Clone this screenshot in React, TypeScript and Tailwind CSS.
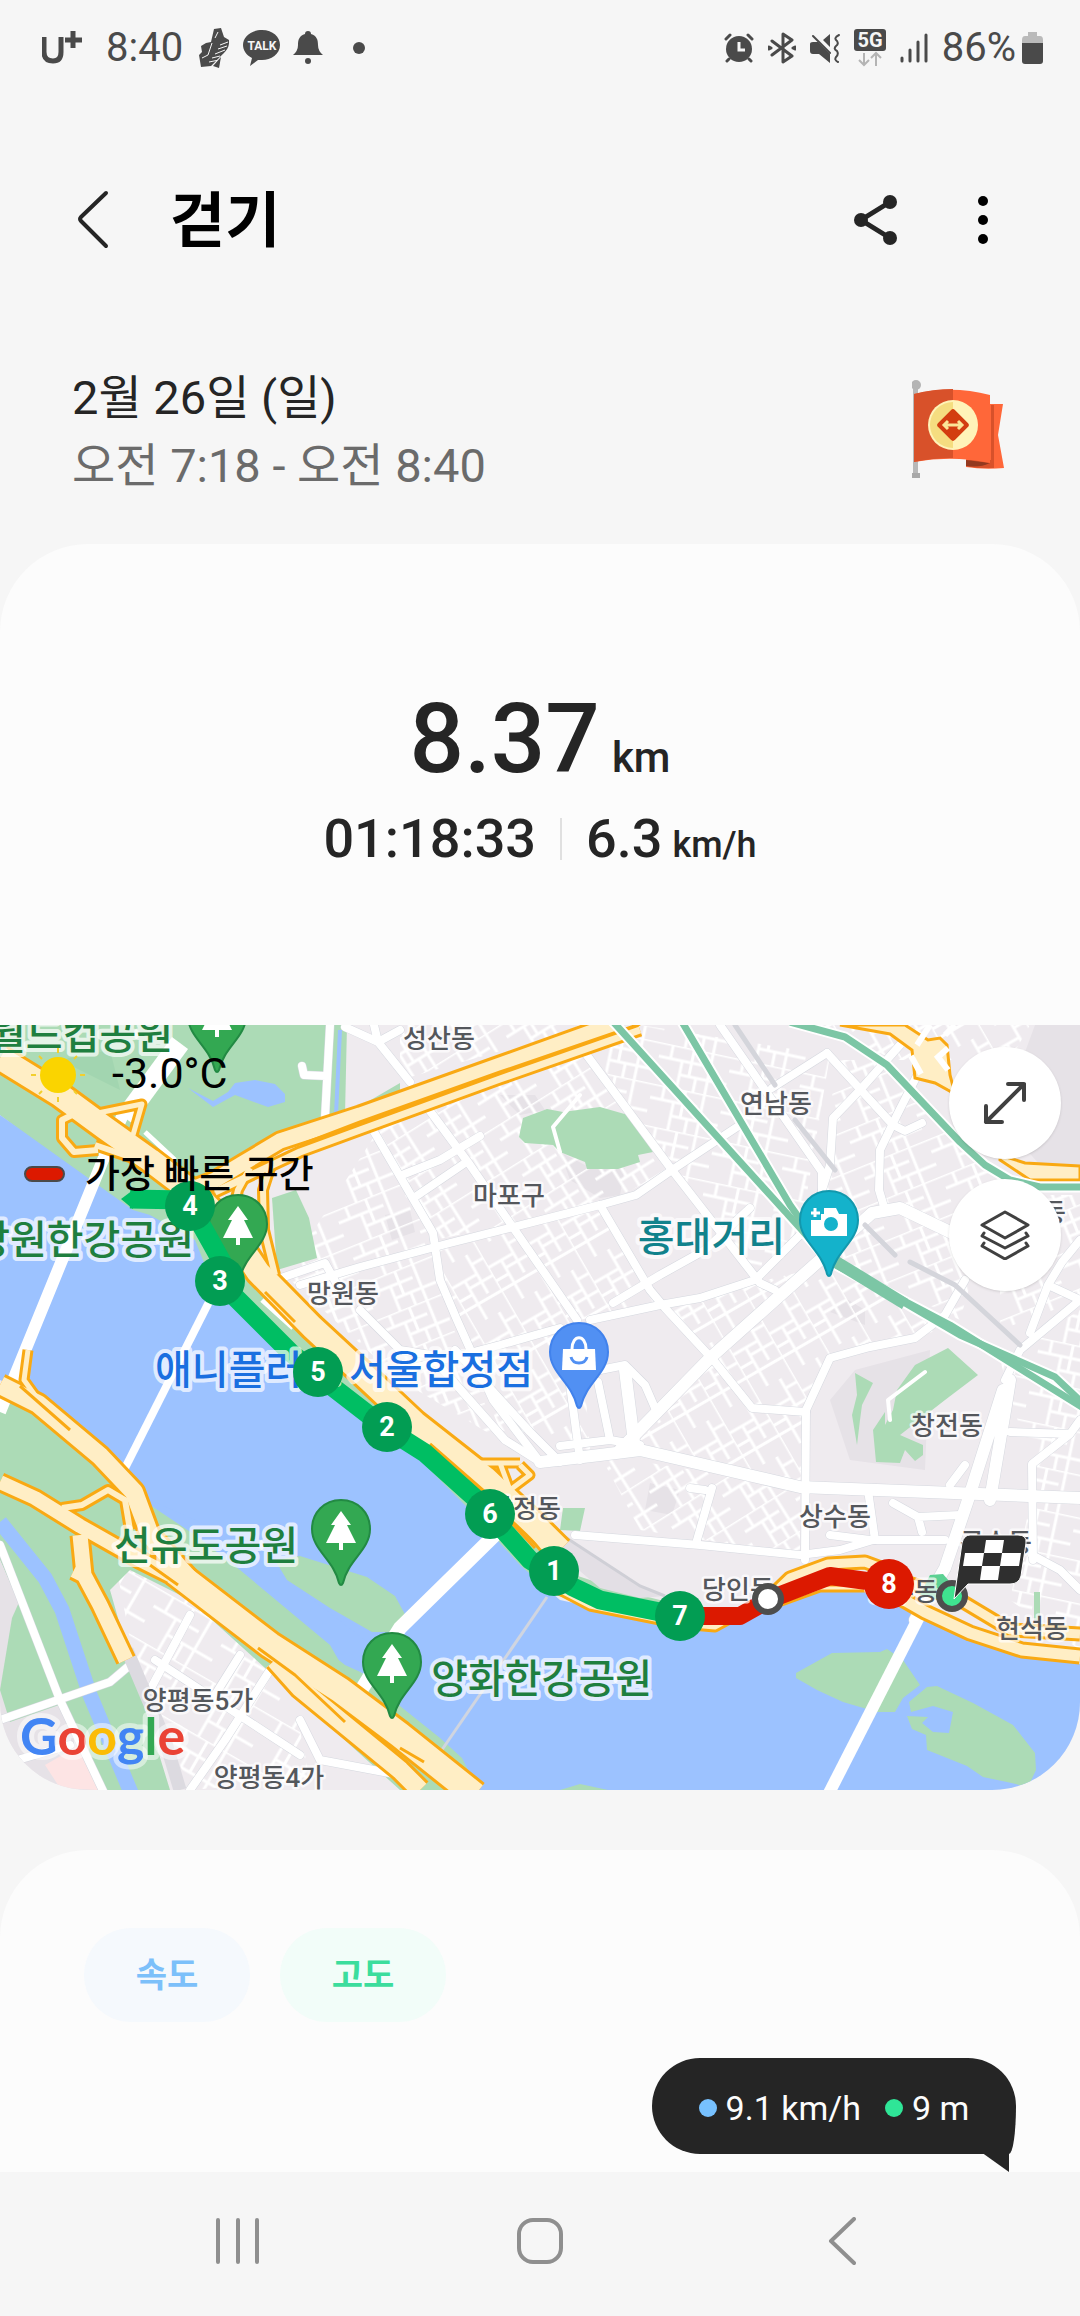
import type { ReactNode } from 'react';

const cityRoads = [
  'M373 1130 L433 1233 L440 1280 L457 1320 L493 1400 L540 1462',
  'M427 1107 L470 1165 L510 1223 L577 1320',
  'M583 1050 L672 1170 L760 1283 L775 1290',
  'M300 1285 L360 1267 L450 1243 L600 1205 L636 1195 L672 1170 L740 1125',
  'M600 1205 L650 1290 L665 1308 L715 1362 L752 1408 L806 1412',
  'M590 1320 L660 1305 L700 1298 L755 1280 L800 1235',
  'M613 1303 L660 1275 L705 1250 L750 1208',
  'M402 1175 L440 1160 L480 1136 M415 1197 L465 1163',
  'M827 1053 L893 1125 L905 1131 L922 1123',
  'M827 1053 L772 1088 M900 1045 L860 1090 L833 1118 L830 1165 L822 1190',
  'M885 1210 L879 1190 L880 1150 L897 1115 L930 1050',
  'M720 1025 L822 1172 L822 1200 L800 1235',
  'M805 1560 L806 1410 L830 1358 L870 1347 L915 1338 L945 1315 L965 1280',
  'M575 1535 L700 1545 L800 1555 L840 1550 L873 1540 L945 1540',
  'M868 1490 L875 1540 M893 1503 L918 1517 L960 1515 M918 1517 L922 1532',
  'M600 1370 L625 1365 L645 1385 L655 1408 M570 1385 L580 1460',
  'M598 1382 L610 1440 M560 1446 L610 1440 L640 1445',
  'M430 1355 L505 1440 L540 1462 M455 1350 L530 1432 L560 1462',
  'M405 1370 L500 1345 L560 1328',
  'M360 1310 L400 1350 L430 1355',
  'M1030 1333 L1048 1285 L1080 1300 M1048 1285 L1062 1262 L1080 1240',
  'M1080 1300 L1020 1350 L1005 1380',
  'M1010 1432 L1070 1434 L1032 1464 L1033 1560 M1070 1434 L1080 1420',
  'M1032 1555 L1060 1570 L1080 1590 M965 1465 L950 1485',
  'M374 1025 L378 1042 L410 1082 M378 1042 L400 1030 M345 1027 L378 1042',
  'M330 1025 L325 1118 M302 1066 L304 1075 L326 1076',
  'M690 1488 L705 1490 M712 1488 L697 1540',
  'M830 1535 L870 1540 M275 1280 L325 1263 L340 1290',
];

const wideRoads = [
  'M540 1462 L600 1455 L640 1450 L800 1487 L1080 1498',
  'M620 1450 L710 1358 L775 1300 L820 1260 L872 1213 L900 1208 L950 1232',
  'M915 1620 L945 1568 L968 1500 L1003 1390 M990 1500 L1006 1405 L1010 1380',
  'M625 1370 L635 1450',
];

const southRoads = [
  'M0 1545 L60 1700 L105 1795',
  'M0 1720 L110 1682 L130 1665',
  'M190 1615 L150 1690 M155 1660 L300 1755 M240 1655 L215 1695',
  'M270 1670 L225 1740 L190 1790 M300 1720 L320 1760 L400 1775',
  'M0 1765 L70 1745',
];

const river =
  'M0 1115 L133 1210 L150 1215 L195 1240 L215 1290 L280 1350 L350 1412 L420 1460 L470 1510 L520 1565 L560 1600 L660 1622 L720 1628 L800 1592 L880 1592 L930 1614 L1020 1655 L1080 1664 L1080 1790 L478 1790 L462 1758 L440 1738 L400 1706 L365 1675 L330 1650 L240 1580 L200 1560 L150 1505 L100 1455 L40 1400 L0 1380 Z';

const highways = [
  { d: 'M215 1192 L300 1152 L360 1130 L500 1079 L640 1030', w: 7 },
  { d: 'M185 1192 L215 1180 L245 1162 L280 1141 L360 1115 L500 1065 L620 1022', w: 15 },
  { d: 'M78 1112 L62 1120 L62 1138 L74 1152 L98 1150', w: 6 },
  { d: 'M95 1145 L130 1157 L170 1182', w: 6 },
  { d: 'M98 1113 L142 1104 L133 1135', w: 5 },
  { d: 'M250 1168 L238 1190 L232 1215 M272 1162 L263 1190 L264 1230 L275 1275', w: 6 },
  { d: 'M0 1058 L60 1095 L105 1128 L150 1160 L200 1198 L230 1230 L258 1272 L312 1327 L366 1377 L415 1423 L485 1478 L535 1525 L560 1550', w: 23 },
  { d: 'M478 1463 L520 1463 M500 1463 L510 1490 L530 1475 L520 1465', w: 5 },
  { d: 'M510 1505 L545 1548', w: 7 },
  { d: 'M28 1350 L24 1380 L60 1430', w: 5 },
  { d: 'M550 1585 L590 1606 L680 1624 L715 1627 L735 1616', w: 5 },
  { d: 'M765 1602 L790 1578 L828 1564 L865 1562 L900 1575', w: 9 },
  { d: 'M770 1606 L820 1588 L890 1588', w: 3 },
  { d: 'M900 1580 L960 1600 L1010 1630 L1080 1634', w: 9 },
  { d: 'M890 1592 L925 1612 L970 1633 L1022 1650 L1080 1656', w: 11 },
];

const southHighways = [
  { d: 'M30 1395 L80 1435 L125 1480', w: 6 },
  { d: 'M62 1508 L82 1505 L108 1490 L125 1500 L130 1530', w: 6 },
  { d: 'M80 1535 L84 1575 L74 1570 M84 1575 L100 1605 L126 1660', w: 15 },
  { d: 'M0 1385 L38 1404 L100 1456 L134 1492 L150 1535 L190 1580', w: 18 },
  { d: 'M0 1482 L35 1498 L80 1526 L140 1560 L190 1585', w: 14 },
  { d: 'M275 1660 L300 1688 L400 1770 L420 1790', w: 18 },
  { d: 'M175 1572 L270 1645 L340 1690 L400 1735 L475 1795', w: 25 },
];

const rails = [
  'M607 1015 L800 1228 L830 1262 L950 1325 L1090 1412',
  'M678 1015 L790 1205 L830 1262',
  'M790 1022 L845 1037 L887 1065 L960 1142 L985 1165 L1010 1180 L1040 1187 L1080 1187',
  'M900 1300 L960 1335 L1055 1377 L1090 1410',
];

// residential blocks, each with its own street direction
const blocks = [
  { fill: 'url(#streetsA)', points: '285,1275 375,1135 435,1240 450,1320 500,1440 400,1380' },
  { fill: 'url(#streetsB)', points: '378,1130 580,1055 672,1170 600,1205 435,1240' },
  { fill: 'url(#streetsC)', points: '436,1243 600,1208 660,1300 580,1320 590,1450 500,1430 455,1320' },
  { fill: 'url(#streetsD)', points: '640,1025 830,1055 800,1235 755,1280 672,1170 590,1048' },
  { fill: 'url(#streetsA)', points: '835,1060 890,1060 1000,1180 960,1320 840,1262 825,1190' },
  { fill: 'url(#streetsC)', points: '660,1305 830,1265 940,1330 830,1358 806,1412 800,1485 630,1450 715,1362' },
  { fill: 'url(#streetsB)', points: '600,1455 800,1487 800,1555 640,1530' },
  { fill: 'url(#streetsD)', points: '1000,1360 1080,1310 1080,1650 1010,1600 1035,1480' },
  { fill: 'url(#streetsA)', points: '1000,1195 1080,1195 1080,1300 1000,1330' },
  { fill: 'url(#streetsB)', points: '400,1025 590,1025 400,1080' },
  { fill: 'url(#streetsE)', points: '115,1560 190,1600 290,1680 310,1780 190,1790 130,1640' },
  { fill: 'url(#streetsC)', points: '790,1025 1030,1025 1010,1060 900,1060' },
];

const placeLabels = [
  { text: '성산동', x: 439, y: 1048 },
  { text: '연남동', x: 776, y: 1113 },
  { text: '마포구', x: 509, y: 1205 },
  { text: '망원동', x: 343, y: 1303 },
  { text: '창전동', x: 947, y: 1435 },
  { text: '상수동', x: 835, y: 1526 },
  { text: '당인동', x: 738, y: 1599 },
  { text: '현석동', x: 1032, y: 1638 },
  { text: '합정동', x: 525, y: 1518 },
  { text: '상수동', x: 902, y: 1601 },
  { text: '구수동', x: 996, y: 1552 },
  { text: '대흥동', x: 1030, y: 1222 },
  { text: '양평동5가', x: 198, y: 1710 },
  { text: '양평동4가', x: 269, y: 1787 },
];

const poiLabels = [
  { text: '월드컵공원', x: 173, y: 1049, fill: '#1f7f3f' },
  { text: '망원한강공원', x: 194, y: 1254, fill: '#1f7f3f' },
  { text: '선유도공원', x: 298, y: 1560, fill: '#1f7f3f' },
  { text: '양화한강공원', x: 652, y: 1693, fill: '#1f7f3f' },
  { text: '애니플러스 서울합정점', x: 533, y: 1384, fill: '#1a6fe0' },
  { text: '홍대거리', x: 785, y: 1251, fill: '#11828c' },
];

const kmMarkers = [
  { km: 4, x: 190, y: 1206 },
  { km: 3, x: 220, y: 1281 },
  { km: 5, x: 318, y: 1372 },
  { km: 2, x: 387, y: 1427 },
  { km: 6, x: 490, y: 1514 },
  { km: 1, x: 554, y: 1571 },
  { km: 7, x: 680, y: 1616 },
  { km: 8, x: 889, y: 1584, fast: true },
];

function StreetPattern({ id, angle, w, h }: { id: string; angle: number; w: number; h: number }) {
  return (
    <pattern id={id} width={w * 3} height={h * 3} patternUnits="userSpaceOnUse" patternTransform={`rotate(${angle})`}>
      <path
        d={`M0 0 H${w * 3} M0 ${h} H${w * 2} M${w} ${h * 2} H${w * 3} M${w / 2} 0 V${h} M${w * 1.4} 0 V${h * 2} M${w * 2.2} 0 V${h * 3} M${w} ${h} V${h * 3} M${w * 1.7} ${h * 2} V${h * 3}`}
        stroke="#fff"
        strokeWidth="3"
        fill="none"
      />
    </pattern>
  );
}

function Pin({ x, y, fill, edge, children }: { x: number; y: number; fill: string; edge: string; children: ReactNode }) {
  return (
    <g transform={`translate(${x} ${y})`}>
      <path
        d="M0 -29 C17 -29 29 -16 29 0 C29 21 7 31 2 54 Q0 58 -2 54 C-7 31 -29 21 -29 0 C-29 -16 -17 -29 0 -29 Z"
        fill={fill}
        stroke={edge}
        strokeWidth="2"
      />
      {children}
    </g>
  );
}

function TreePin({ x, y }: { x: number; y: number }) {
  return (
    <Pin x={x} y={y} fill="#33a852" edge="#228a43">
      <path d="M0 -18 L10 -4 H6 L15 14 H2 V21 H-2 V14 H-15 L-6 -4 H-10 Z" fill="#fff" />
    </Pin>
  );
}

function RouteMap() {
  return (
    <svg
      viewBox="0 1025 1080 765"
      preserveAspectRatio="xMidYMid slice"
      className="block h-[765px] w-full"
      role="img"
      aria-label="이동 경로 지도"
    >
      <defs>
        <StreetPattern id="streetsA" angle={-22} w={24} h={13} />
        <StreetPattern id="streetsB" angle={-32} w={20} h={14} />
        <StreetPattern id="streetsC" angle={60} w={22} h={14} />
        <StreetPattern id="streetsD" angle={12} w={24} h={14} />
        <StreetPattern id="streetsE" angle={30} w={26} h={18} />
      </defs>

      <rect x="0" y="1025" width="1080" height="765" fill="#efebef" />
      <g fill="#e6e2e7">
        <path d="M1035 1025 H1080 V1165 H1040 L1000 1120 Z" />
        <path d="M500 1095 L535 1095 L545 1110 L520 1115 Z M560 1152 L585 1165 L625 1168 L620 1195 L600 1198 L570 1180 Z" />
        <path d="M830 1400 L855 1370 L930 1350 L925 1470 L850 1460 Z M385 1215 L410 1210 L415 1232 L392 1240 Z" />
        <path d="M830 1312 L845 1298 L865 1310 L865 1325 Z M650 1483 L680 1490 L672 1515 L645 1510 Z" />
      </g>
      {blocks.map((block, i) => (
        <polygon key={i} points={block.points} fill={block.fill} />
      ))}

      {/* parks */}
      <g fill="#acdbb6">
        <path d="M0 1025 H347 L345 1115 L400 1083 V1100 L290 1140 L230 1175 L190 1185 L215 1225 L300 1310 L420 1430 L560 1570 L620 1590 L700 1610 L640 1622 L540 1590 L470 1510 L350 1412 L215 1290 L150 1230 L0 1115 Z" />
        <path d="M272 1198 L296 1190 L309 1218 L317 1258 L277 1270 Z" />
        <path d="M523 1118 L547 1109 L563 1112 L600 1107 L628 1115 L653 1152 L638 1155 L640 1162 L618 1169 L587 1169 L585 1162 L560 1152 L553 1145 L525 1143 L519 1137 Z" />
        <path d="M948 1348 L978 1375 L945 1400 L900 1435 L923 1445 V1455 L915 1461 L905 1450 L900 1463 L876 1462 L873 1430 L885 1412 V1425 L893 1410 L897 1390 L915 1365 Z" />
        <path d="M855 1373 L873 1383 L862 1405 L860 1420 L857 1445 L852 1415 L857 1395 Z" />
        <path d="M563 1508 L585 1508 L580 1531 L560 1530 Z M1034 1592 H1040 V1620 H1034 Z" />
        <path d="M0 1385 L130 1480 L200 1560 L240 1580 L330 1650 L400 1700 L470 1745 L490 1790 H400 L190 1600 L130 1570 L110 1590 L130 1660 L170 1790 H100 L0 1560 Z" />
        <path d="M0 1620 L20 1620 L60 1710 L10 1720 Z" />
      </g>
      <path d="M0 1560 L100 1790 H0 Z" fill="#e6e2e7" />
      <path d="M12 1618 L20 1600 L62 1704 L10 1722 L0 1690 Z" fill="#acdbb6" />
      <path d="M45 1765 L80 1745 L98 1790 L60 1788 Z" fill="#fde4e4" />
      <path d="M90 1075 L60 1060 L110 1050 L120 1090 Z" fill="#a2d5b0" />

      {/* river */}
      <path d={river} fill="#9cc2ff" />
      <path d="M150 1500 L200 1522 L260 1550 L300 1590 L365 1640 L400 1690 L345 1665 L240 1582 L200 1560 Z" fill="#9cc2ff" />
      <path d="M0 1522 L45 1578 L62 1610 L90 1695 L132 1795" fill="none" stroke="#9cc2ff" strokeWidth="15" />
      <path d="M188 1088 L213 1107 L235 1095 L268 1107 L285 1102 L285 1094 L275 1084 L255 1080 L235 1083 L228 1092 L213 1101 Z" fill="#9cc2ff" />
      <path d="M340 1030 L336 1115" stroke="#9cc2ff" strokeWidth="4" />
      <g fill="#acdbb6">
        <path d="M150 1505 L195 1535 L240 1570 L330 1645 L350 1680 L260 1640 L180 1570 Z" />
        <path d="M275 1560 L300 1556 L367 1577 L395 1596 L407 1618 L395 1632 L372 1632 L330 1608 L287 1580 Z" />
        <path d="M796 1673 L832 1653 L880 1652 L887 1649 L903 1660 L920 1685 L903 1698 L895 1712 L877 1712 L843 1702 L817 1690 L796 1678 Z" />
        <path d="M909 1702 L927 1687 L937 1686 L973 1703 L1013 1725 L1035 1753 L1036 1770 L1028 1787 L1007 1782 L983 1777 L967 1766 L927 1750 L926 1735 L912 1729 L907 1716 L928 1717 L922 1723 L933 1732 L949 1733 L953 1712 L933 1706 L911 1712 Z" />
        <path d="M560 1790 L580 1784 L608 1790 Z" />
      </g>

      {/* streets */}
      <g fill="none" strokeLinecap="round" strokeLinejoin="round">
        <g stroke="#d5d8df">
          {cityRoads.map((d) => <path key={d} d={d} strokeWidth="9" />)}
          {wideRoads.map((d) => <path key={d} d={d} strokeWidth="13" />)}
          {southRoads.map((d) => <path key={d} d={d} strokeWidth="9" />)}
        </g>
        <g stroke="#fff">
          {cityRoads.map((d) => <path key={d} d={d} strokeWidth="8" />)}
          {wideRoads.map((d) => <path key={d} d={d} strokeWidth="12" />)}
          {southRoads.map((d) => <path key={d} d={d} strokeWidth="8" />)}
          <path d="M580 1095 L553 1127 L560 1152 M890 1420 L888 1400 L925 1372" strokeWidth="4" />
        </g>
        <path d="M735 1025 L775 1085 M795 1120 L835 1170 M865 1225 L895 1255 M910 1262 L955 1285 L1020 1345" stroke="#d4d5db" strokeWidth="5" />
      </g>
      <path d="M562 1535 L640 1586 L665 1596 L640 1598 L600 1588 L555 1550 Z" fill="#e3dfe5" />
      <path d="M562 1535 L640 1586 L665 1596" fill="none" stroke="#cfcfd6" strokeWidth="3" />
      <path d="M127 1650 L165 1740 L180 1790" fill="none" stroke="#dcdae0" strokeWidth="13" />

      {/* bridges */}
      <g fill="none" stroke="#fff">
        <path d="M180 1043 L125 1118" strokeWidth="20" />
        <path d="M125 1110 L105 1155 L0 1412" strokeWidth="12" />
        <path d="M210 1300 L120 1478" strokeWidth="8" />
        <path d="M505 1525 L400 1628 L355 1700" strokeWidth="14" />
        <path d="M920 1615 L828 1795" strokeWidth="12" />
        <path d="M145 1132 L175 1160 M262 1300 L293 1328" strokeWidth="5" />
      </g>
      <path d="M547 1597 L437 1757" stroke="#d0d5e0" strokeWidth="3" />

      {/* expressways */}
      <g fill="none" strokeLinejoin="round">
        {[...highways, ...southHighways].map((road) => (
          <path key={road.d} d={road.d} stroke="#f9a913" strokeWidth={road.w + 6} />
        ))}
        {[...highways, ...southHighways].map((road) => (
          <path key={road.d} d={road.d} stroke="#ffeec5" strokeWidth={road.w} />
        ))}
        <path d="M300 1145 L360 1122 L500 1072 L640 1024 M265 1292 L295 1322 M430 1444 L485 1492 M490 1500 L535 1548 M150 1565 L178 1585" stroke="#f9a913" strokeWidth="3" />
        <path d="M258 1648 L295 1675 L345 1722 M400 1748 L424 1762 M20 1386 L70 1430" stroke="#f9a913" strokeWidth="3" />
      </g>
      <path d="M840 1025 L890 1034 L912 1050 L915 1078 L935 1083 L955 1094 L950 1075 L947 1045 L940 1038 L928 1040 L905 1025 Z" fill="#ffeec5" stroke="#f9a913" strokeWidth="3" />
      <path d="M1000 1155 L1025 1163 L1080 1166 V1180 H1030 L1000 1160 Z" fill="#ffeec5" stroke="#f9a913" strokeWidth="3" />
      <path d="M911 1056 L921 1074 M948 1048 L938 1057 L948 1070 M917 1045 L930 1025 M945 1035 L955 1025" fill="none" stroke="#fff" strokeWidth="6" />

      <g fill="none" strokeLinejoin="round">
        {rails.map((d) => <path key={d} d={d} stroke="#fff" strokeWidth="11" />)}
        {rails.map((d) => <path key={d} d={d} stroke="#7cc6a5" strokeWidth="7" />)}
        <path d="M825 1255 L905 1304" stroke="#7cc6a5" strokeWidth="12" />
      </g>

      <TreePin x={217} y={1016} />
      <TreePin x={238} y={1224} />

      {/* walked route */}
      <g fill="none" strokeLinejoin="round">
        <path d="M130 1199 L185 1200 L203 1228 L222 1262 L228 1290 L290 1352 L330 1385 L387 1429 L425 1453 L475 1498 L505 1532 L530 1560 L573 1587 L600 1600 L680 1616" stroke="#00be63" strokeWidth="19" />
        <path d="M680 1616 L740 1616 L768 1600 L830 1576 L889 1584" stroke="#dc1900" strokeWidth="18" />
      </g>
      <path d="M121 1199 L133 1190 V1209 Z" fill="#00be63" />
      <path d="M920 1595 L930 1575 L943 1574 L955 1588 L940 1600 Z" fill="#5cd193" />

      <g fontFamily="Roboto, 'Noto Sans CJK KR', sans-serif" paintOrder="stroke" strokeLinejoin="round">
        {placeLabels.map((label) => (
          <text key={`${label.text}${label.x}`} x={label.x} y={label.y} textAnchor="middle" fontSize="26" fontWeight="500" fill="#54575c" stroke="#fff" strokeOpacity="0.7" strokeWidth="5">
            {label.text}
          </text>
        ))}
        {poiLabels.map((label) => (
          <text key={label.text} x={label.x} y={label.y} textAnchor="end" fontSize="40" fontWeight="500" fill={label.fill} stroke="#fff" strokeOpacity="0.7" strokeWidth="8">
            {label.text}
          </text>
        ))}
      </g>

      <TreePin x={341} y={1529} />
      <TreePin x={392} y={1662} />
      <Pin x={579} y={1352} fill="#5190f3" edge="#4182ec">
        <path d="M-16 -3 H16 L17 18 H-17 Z" fill="#fff" />
        <path d="M-7 -3 C-7 -18 7 -18 7 -3" fill="none" stroke="#fff" strokeWidth="3" />
        <path d="M-8 5 C-6 13 6 13 8 5" fill="none" stroke="#5190f3" strokeWidth="3" />
      </Pin>
      <Pin x={829} y={1220} fill="#14b2cb" edge="#1398ad">
        <path d="M-18 0 H-8 V-6 H-5 V-12 H7 L10 -6 H18 V16 H-18 Z" fill="#fff" />
        <path d="M-14 -12 V-3 M-18 -7 H-9" stroke="#fff" strokeWidth="3" />
        <circle cx="2" cy="4" r="7" fill="#14b2cb" />
      </Pin>

      {kmMarkers.map((marker) => (
        <g key={marker.km}>
          <circle cx={marker.x} cy={marker.y} r="25" fill={marker.fast ? '#dc1900' : '#029d53'} />
          <text x={marker.x} y={marker.y + 9} textAnchor="middle" fontFamily="Roboto, sans-serif" fontSize="27" fontWeight="700" fill="#fff">
            {marker.km}
          </text>
        </g>
      ))}
      <circle cx="768" cy="1599" r="13" fill="#fff" stroke="#4d4d4d" strokeWidth="6" />
      <circle cx="952" cy="1596" r="13" fill="#3fe28f" stroke="#4d4d4d" strokeWidth="6" />
      <path d="M970 1535 H1018 Q1027 1535 1026 1543 L1021 1576 Q1019 1584 1010 1584 H968 L954 1599 L962 1543 Q964 1535 970 1535 Z" fill="#2f2f2f" stroke="#fff" strokeWidth="1" />
      <path d="M986 1540 H1004 L1002 1553 H1021 L1019 1566 H1000 L998 1580 H980 L982 1566 H963 L965 1553 H984 Z" fill="#fff" />
      <path d="M984 1553 H1002 L1000 1566 H982 Z" fill="#2f2f2f" />

      <text x="20" y="1755" fontFamily="Lato, sans-serif" fontSize="52" fontWeight="700" paintOrder="stroke" stroke="#fff" strokeOpacity="0.5" strokeWidth="10" strokeLinejoin="round">
        <tspan fill="#4285f4">G</tspan>
        <tspan fill="#ea4335">o</tspan>
        <tspan fill="#fbbc05">o</tspan>
        <tspan fill="#4285f4">g</tspan>
        <tspan fill="#34a853">l</tspan>
        <tspan fill="#ea4335">e</tspan>
      </text>
    </svg>
  );
}

function StatusBar() {
  return (
    <div className="flex h-24 items-center justify-between pr-[37px] pl-[42px] text-[40px] leading-none text-[#4a4a4a]">
      <div className="flex items-center">
        <svg width="40" height="34" viewBox="0 0 40 34" fill="none" stroke="currentColor" aria-label="U+">
          <path d="M2 6 V21 Q2 30 11 30 Q19 30 19 21 V6" strokeWidth="5" />
          <path d="M31 0 V17 M23 9 H40" strokeWidth="5" />
        </svg>
        <span className="ml-6">8:40</span>
        <svg className="ml-4" width="32" height="40" viewBox="0 0 32 40" fill="currentColor">
          <path d="M15 1 L22 0 L25 9 L30 12 C31 22 24 25 17 33 L12 38 L2 39 L0 27 L3 24 L2 18 L7 15 L12 14 Z" />
          <path d="M29 14 L21 17 M28 18 L19 21 M26 22 L16 26 M21 28 L13 30 M20 32 L10 34 M3 30 L9 27 L13 15 M16 10 L19 4" stroke="#f6f6f6" strokeWidth="1" />
          <path d="M20 40 L22 29 L14 38 Z" />
        </svg>
        <svg className="ml-3" width="38" height="36" viewBox="0 0 38 36">
          <path d="M19 0 C30 0 37 7 37 15 C37 24 28 30 19 30 L15 30 L7 36 L9 28 C3 25 0 20 0 15 C0 7 8 0 19 0 Z" fill="currentColor" />
          <text x="19" y="20" textAnchor="middle" fontFamily="Roboto, sans-serif" fontSize="12" fontWeight="700" fill="#f6f6f6">TALK</text>
        </svg>
        <svg className="ml-3" width="30" height="34" viewBox="0 0 30 34" fill="currentColor">
          <path d="M15 0 Q18 0 18 3 C24 5 25 9 25 14 Q25 20 30 24 H0 Q5 20 5 14 C5 9 6 5 12 3 Q12 0 15 0 Z" />
          <circle cx="15" cy="30" r="3" />
        </svg>
        <span className="ml-[30px] size-3 rounded-full bg-[#4a4a4a]" />
      </div>
      <div className="flex items-center gap-[14px]">
        <svg width="30" height="30" viewBox="0 0 30 30" fill="currentColor">
          <circle cx="15" cy="16" r="13" />
          <path d="M2 6 L6 2 M28 6 L24 2 M5 26 L3 28 M25 26 L27 28" stroke="currentColor" strokeWidth="3" strokeLinecap="round" />
          <path d="M15 9 V17 H21" fill="none" stroke="#f6f6f6" strokeWidth="3" />
        </svg>
        <svg width="28" height="32" viewBox="0 0 28 32" fill="none" stroke="currentColor" strokeWidth="3" strokeLinejoin="round" strokeLinecap="round">
          <path d="M4 9 L24 24 L15 30 V2 L24 8 L4 23" />
          <path d="M1 15 L3 16 L1 17 M27 15 L25 16 L27 17" />
        </svg>
        <svg width="30" height="30" viewBox="0 0 30 30" fill="currentColor">
          <path d="M0 11 Q0 9 3 9 H8 L20 21 V30 L9 21 H3 Q0 21 0 18 Z M20 1 V14 L13 7 Z" />
          <path d="M3 3 L20 20 M29 2 Q23 5 27 8 Q29 11 26 13 Q23 16 27 18 Q29 21 26 24 Q24 27 28 29" fill="none" stroke="currentColor" strokeWidth="2" strokeLinecap="round" />
        </svg>
        <svg width="32" height="38" viewBox="0 0 32 38">
          <rect width="32" height="22" rx="3" fill="currentColor" />
          <text x="16" y="18" textAnchor="middle" fontFamily="Roboto, sans-serif" fontSize="20" fontWeight="700" fill="#f6f6f6">5G</text>
          <path d="M10 24 V36 M5 31 L10 36 L15 31 M22 37 V24 M17 29 L22 24 L27 29" fill="none" stroke="#b4b4b4" strokeWidth="2" />
        </svg>
        <svg width="28" height="30" viewBox="0 0 28 30" stroke="currentColor" strokeWidth="3" strokeLinecap="round">
          <path d="M2 25 V28 M10 17 V28 M18 9 V28 M26 2 V28" />
        </svg>
        <div className="flex items-center gap-[6px]">
          <span>86%</span>
          <svg width="21" height="32" viewBox="0 0 21 32">
            <path d="M6 0 H15 V4 H18 Q21 4 21 8 V12 H0 V8 Q0 4 3 4 H6 Z" fill="#bababa" />
            <path d="M0 11 H21 V29 Q21 32 18 32 H3 Q0 32 0 29 Z" fill="currentColor" />
          </svg>
        </div>
      </div>
    </div>
  );
}

function AppHeader() {
  return (
    <header className="flex h-[248px] items-center justify-between pr-[86px] pl-[72px]">
      <div className="flex items-center gap-14">
        <button aria-label="뒤로">
          <svg width="42" height="60" viewBox="0 0 42 60" fill="none" stroke="#252525" strokeWidth="4" strokeLinecap="round" strokeLinejoin="round">
            <path d="M34 3 L9 27 Q7 29 9 31 L34 56" />
          </svg>
        </button>
        <h1 className="pt-1 text-[60px] leading-none font-bold text-black">걷기</h1>
      </div>
      <div className="flex items-center gap-[74px]">
        <button aria-label="공유">
          <svg width="44" height="50" viewBox="0 0 44 50" fill="#252525">
            <path d="M36 7 L7 25 L36 43" fill="none" stroke="#252525" strokeWidth="5" />
            <circle cx="36" cy="7" r="7" />
            <circle cx="7" cy="25" r="7" />
            <circle cx="36" cy="43" r="7" />
          </svg>
        </button>
        <button aria-label="더보기" className="px-[6px]">
          <svg width="10" height="50" viewBox="0 0 10 50">
            <circle cx="5" cy="6" r="5" />
            <circle cx="5" cy="25" r="5" />
            <circle cx="5" cy="44" r="5" />
          </svg>
        </button>
      </div>
    </header>
  );
}

function FlagBadge() {
  return (
    <svg width="96" height="100" viewBox="0 0 96 100">
      <rect x="1" y="8" width="5" height="86" fill="#b8b8b8" />
      <circle cx="4" cy="5" r="5" fill="#b4b4b4" />
      <rect x="0" y="93" width="8" height="5" fill="#a8a8a8" />
      <path d="M54 24 H91 L86 55 L92 88 Q72 90 54 87 Z" fill="#ff6739" />
      <path d="M54 80 H79 V25 H82 V88 H66 L54 86 Z" fill="#d8512a" />
      <path d="M54 80 L78 83 Q68 88 54 86 Z" fill="#93391f" />
      <path d="M2 14 Q40 5 78 15 V83 Q40 75 2 82 Z" fill="#ff6739" />
      <path d="M2 14 Q21 9 41 9 V78 Q21 78 2 82 Z" fill="#d8512a" />
      <circle cx="41" cy="45" r="25" fill="#fff3b8" />
      <path d="M41 22 A23 23 0 0 0 41 68 Z" fill="#f5dd80" />
      <rect x="29" y="33" width="24" height="24" rx="3" fill="#d33d10" transform="rotate(45 41 45)" />
      <path d="M32 45 H50 M36 41 L32 45 L36 49 M46 41 L50 45 L46 49" fill="none" stroke="#fbe597" strokeWidth="3" />
    </svg>
  );
}

function MapOverlay() {
  return (
    <>
      <div className="absolute top-[14px] left-6 flex items-center gap-5">
        <svg width="68" height="68" viewBox="0 0 68 68">
          <circle cx="34" cy="36" r="18" fill="#fad400" />
          <path d="M34 9 V14 M34 58 V63 M7 36 H12 M56 36 H61 M15 17 L18 20 M50 52 L53 55 M53 17 L50 20 M18 52 L15 55" stroke="#f2cf2d" strokeWidth="2" />
        </svg>
        <span className="text-[43px] leading-none text-black">-3.0°C</span>
      </div>
      <div className="absolute top-[125px] left-6 flex items-center gap-5">
        <span className="h-4 w-[41px] rounded-full border-2 border-[#4a4a4a] bg-[#dc1900]" />
        <span className="text-[38px] leading-[48px] font-medium text-black">가장 빠른 구간</span>
      </div>
      <div className="absolute top-[22px] right-[19px] flex flex-col gap-5">
        <button aria-label="지도 확대" className="flex size-28 items-center justify-center rounded-full bg-white shadow-sm">
          <svg width="44" height="44" viewBox="0 0 44 44" fill="none" stroke="#404040" strokeWidth="4" strokeLinecap="round" strokeLinejoin="round">
            <path d="M3 41 L41 3 M25 3 H41 V19 M3 25 V41 H19" />
          </svg>
        </button>
        <button aria-label="지도 유형" className="flex size-28 items-center justify-center rounded-full bg-white shadow-sm">
          <svg width="50" height="50" viewBox="0 0 50 50" fill="none" stroke="#404040" strokeWidth="3" strokeLinecap="round" strokeLinejoin="round">
            <path d="M25 2 L48 15 L25 28 L2 15 Z M4 23 L2 26 L25 38 L48 26 L46 23 M4 33 L2 36 L25 49 L48 36 L46 33" />
          </svg>
        </button>
      </div>
    </>
  );
}

function ChartCard() {
  return (
    <section className="flex flex-1 flex-col rounded-t-[88px] bg-[#fcfcfc] pt-[78px]">
      <div className="flex gap-[30px] pl-[84px] text-[34px] leading-none font-bold">
        <button className="h-[94px] w-[166px] rounded-full bg-[#f5f9fd] text-[#7cc0fa]">속도</button>
        <button className="h-[94px] w-[166px] rounded-full bg-[#f2fdf9] text-[#3cdd9d]">고도</button>
      </div>
      <div className="mt-9 flex justify-end pr-16">
        <div className="relative flex h-24 w-[364px] items-center justify-center gap-6 rounded-[48px] rounded-br-[7px_48px] bg-[#252525] pt-1 text-[34px] leading-none text-[#fcfcfc]">
          <span className="flex items-center gap-[9px]">
            <i className="size-[18px] rounded-full bg-[#77c1ff]" />
            9.1 km/h
          </span>
          <span className="flex items-center gap-[9px]">
            <i className="size-[18px] rounded-full bg-[#2fe597]" />
            9 m
          </span>
          <svg className="absolute right-[7px] -bottom-[18px]" width="28" height="20" viewBox="0 0 28 20">
            <path d="M0 0 H28 V20 Z" fill="#252525" />
          </svg>
        </div>
      </div>
    </section>
  );
}

function NavigationBar() {
  return (
    <nav className="grid h-36 grid-cols-3 bg-[#f6f6f6] px-[87px] pb-[6px]">
      <button aria-label="최근 앱" className="flex items-center justify-center">
        <svg width="44" height="46" viewBox="0 0 44 46" stroke="#8f8f8f" strokeWidth="4" strokeLinecap="round">
          <path d="M2 2 V44 M22 2 V44 M41 2 V44" />
        </svg>
      </button>
      <button aria-label="홈" className="flex items-center justify-center">
        <span className="size-[46px] rounded-2xl border-4 border-[#8f8f8f]" />
      </button>
      <button aria-label="뒤로 가기" className="flex items-center justify-center">
        <svg width="28" height="48" viewBox="0 0 28 48" fill="none" stroke="#8f8f8f" strokeWidth="4" strokeLinecap="round" strokeLinejoin="round">
          <path d="M26 2 L3 24 L26 46" />
        </svg>
      </button>
    </nav>
  );
}

export default function App() {
  return (
    <div className="flex min-h-screen flex-col bg-[#f6f6f6] font-[Roboto,'Noto_Sans_CJK_KR',sans-serif] text-[#252525]">
      <StatusBar />
      <AppHeader />

      <section className="flex h-[200px] items-start justify-between px-[72px] pt-5">
        <div className="text-[47px] leading-[68px]">
          <p>2월 26일 (일)</p>
          <p className="text-[#6b6b6b]">오전 7:18 - 오전 8:40</p>
        </div>
        <div className="pt-4">
          <FlagBadge />
        </div>
      </section>

      <section className="overflow-hidden rounded-[88px] bg-[#fcfcfc]">
        <div className="flex h-[481px] flex-col items-center pt-[139px] font-medium">
          <p className="flex items-baseline gap-3">
            <span className="text-[96px] leading-[112px]">8.37</span>
            <span className="text-[42px]">km</span>
          </p>
          <div className="mt-1 flex items-center">
            <span className="text-[54px] leading-[80px]">01:18:33</span>
            <span className="mx-6 h-[42px] w-[2px] bg-[#e0e0e0]" />
            <p className="flex items-baseline gap-[10px]">
              <span className="text-[54px] leading-[80px]">6.3</span>
              <span className="text-[36px]">km/h</span>
            </p>
          </div>
        </div>
        <div className="relative">
          <RouteMap />
          <MapOverlay />
        </div>
      </section>

      <div className="h-[60px]" />
      <ChartCard />
      <NavigationBar />
    </div>
  );
}
